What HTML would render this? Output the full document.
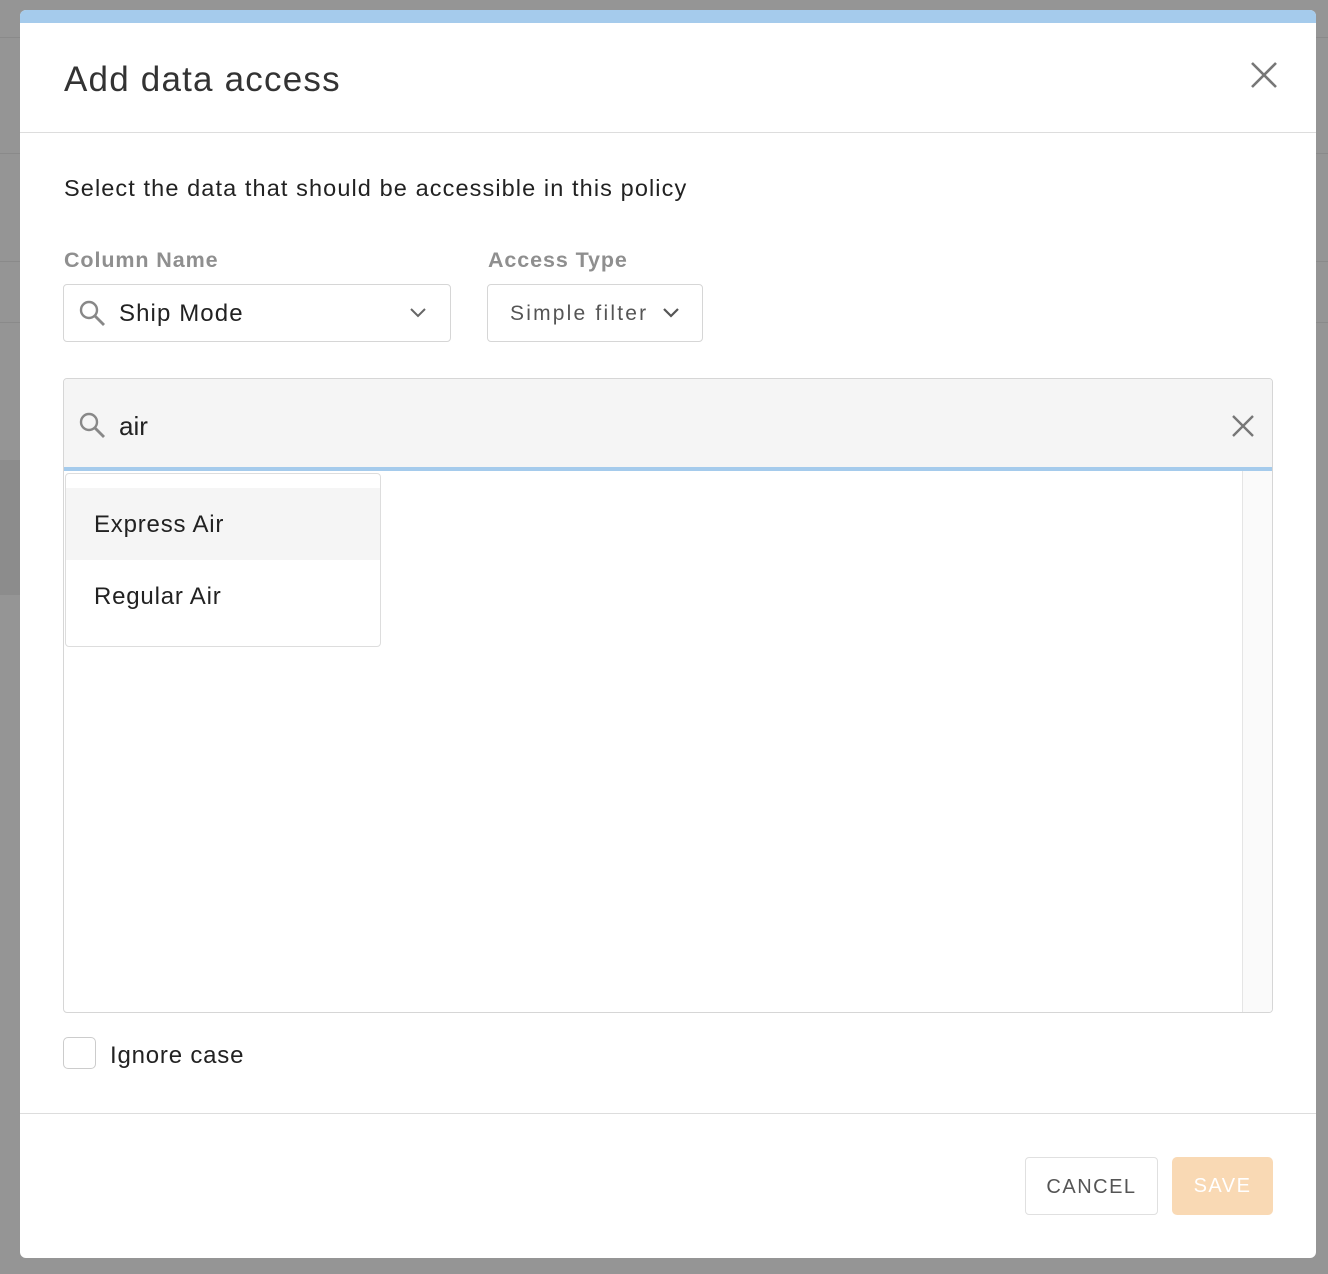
<!DOCTYPE html>
<html><head><meta charset="utf-8"><style>
*{box-sizing:border-box;margin:0;padding:0}
body{width:1328px;height:1274px;background:#959595;position:relative;overflow:hidden;font-family:"Liberation Sans",sans-serif}
.hl{position:absolute;left:0;width:1328px;height:1px;background:#8a8a8a}
.modal{position:absolute;left:20px;top:10px;width:1296px;height:1248px;background:#fff;border-radius:6px;overflow:hidden}
.topbar{position:absolute;left:0;top:0;width:100%;height:13px;background:#a5cbec}
.abs{position:absolute}
.title{left:44px;top:50px;font-size:35px;color:#333;letter-spacing:1.2px}
.sub{left:44px;top:165px;font-size:23.5px;color:#222;letter-spacing:1.1px}
.lbl{top:238px;font-size:21.5px;color:#8f8f8f;font-weight:bold;letter-spacing:0.9px}
.box{border:1px solid #d6d6d6;border-radius:4px;background:#fff}
</style></head><body>
<div class="hl" style="top:37px"></div>
<div class="hl" style="top:153px"></div>
<div class="hl" style="top:261px"></div>
<div class="hl" style="top:322px"></div>
<div class="abs" style="left:0;top:460px;width:20px;height:135px;background:#8c8c8c"></div>
<div class="modal">
 <div class="topbar"></div>
 <div class="abs title">Add data access</div>
 <svg class="abs" style="left:1231px;top:52px" width="26" height="26" viewBox="0 0 26 26"><path d="M1 1L25 25M25 1L1 25" stroke="#777" stroke-width="2.6"/></svg>
 <div class="abs" style="left:0;top:122px;width:100%;height:1px;background:#ddd"></div>
 <div class="abs sub">Select the data that should be accessible in this policy</div>
 <div class="abs lbl" style="left:44px">Column Name</div>
 <div class="abs lbl" style="left:468px">Access Type</div>
 <div class="abs box" style="left:43px;top:274px;width:388px;height:58px">
  <svg class="abs" style="left:15px;top:15px" width="28" height="28" viewBox="0 0 28 28"><circle cx="10" cy="10" r="8" fill="none" stroke="#888" stroke-width="2.4"/><path d="M16 16L25 25" stroke="#888" stroke-width="2.8"/></svg>
  <div class="abs" style="left:55px;top:15px;font-size:24px;color:#222;letter-spacing:1.1px">Ship Mode</div>
  <svg class="abs" style="left:346px;top:23px" width="16" height="10" viewBox="0 0 16 10"><path d="M1 1L8 8L15 1" fill="none" stroke="#666" stroke-width="2"/></svg>
 </div>
 <div class="abs box" style="left:467px;top:274px;width:216px;height:58px">
  <div class="abs" style="left:22px;top:17px;font-size:21px;color:#555;letter-spacing:2.2px">Simple filter</div>
  <svg class="abs" style="left:175px;top:23px" width="16" height="10" viewBox="0 0 16 10"><path d="M1 1L8 8L15 1" fill="none" stroke="#555" stroke-width="2.2"/></svg>
 </div>
 <div class="abs box" style="left:43px;top:368px;width:1210px;height:635px;overflow:hidden">
  <div class="abs" style="left:0;top:0;width:100%;height:89px;background:#f5f5f5"></div>
  <div class="abs" style="left:0;top:88px;width:100%;height:4px;background:#a5cbec"></div>
  <svg class="abs" style="left:15px;top:33px" width="28" height="28" viewBox="0 0 28 28"><circle cx="10" cy="10" r="8" fill="none" stroke="#888" stroke-width="2.4"/><path d="M16 16L25 25" stroke="#888" stroke-width="2.8"/></svg>
  <div class="abs" style="left:55px;top:32px;font-size:26px;color:#222">air</div>
  <svg class="abs" style="left:1168px;top:36px" width="22" height="22" viewBox="0 0 22 22"><path d="M1 1L21 21M21 1L1 21" stroke="#777" stroke-width="2.4"/></svg>
  <div class="abs" style="left:1178px;top:92px;width:31px;height:545px;background:#fafafa;border-left:1px solid #e5e5e5"></div>
  <div class="abs" style="left:1px;top:94px;width:316px;height:174px;border:1px solid #ddd;border-radius:4px;background:#fff;overflow:hidden">
   <div class="abs" style="left:0;top:14px;width:100%;height:72px;background:#f5f5f5"></div>
   <div class="abs" style="left:28px;top:37px;font-size:24px;color:#222;letter-spacing:0.8px">Express Air</div>
   <div class="abs" style="left:28px;top:109px;font-size:24px;color:#222;letter-spacing:0.8px">Regular Air</div>
  </div>
 </div>
 <div class="abs" style="left:43px;top:1027px;width:33px;height:32px;border:1px solid #ccc;border-radius:5px"></div>
 <div class="abs" style="left:90px;top:1032px;font-size:24px;color:#222;letter-spacing:0.8px">Ignore case</div>
 <div class="abs" style="left:0;top:1103px;width:100%;height:1px;background:#ddd"></div>
 <div class="abs box" style="left:1005px;top:1147px;width:133px;height:58px;border-color:#e0e0e0">
  <div class="abs" style="left:0;top:18px;width:100%;text-align:center;font-size:20px;color:#555;letter-spacing:1.5px">CANCEL</div>
 </div>
 <div class="abs" style="left:1152px;top:1147px;width:101px;height:58px;background:#f9d9b4;border-radius:5px">
  <div class="abs" style="left:0;top:18px;width:100%;text-align:center;font-size:20px;color:#fff;letter-spacing:1.5px">SAVE</div>
 </div>
</div>
</body></html>
